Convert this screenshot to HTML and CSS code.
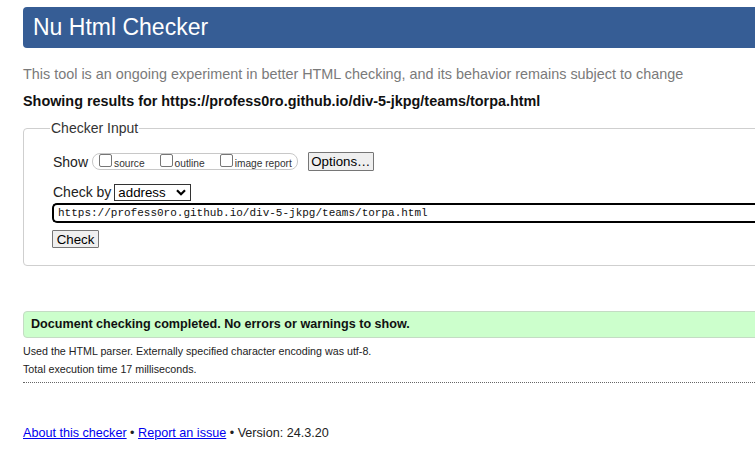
FILE: index.html
```html
<!DOCTYPE html>
<html lang="en">
<head>
<meta charset="utf-8">
<title>Nu Html Checker</title>
<link rel="stylesheet" href="styles.css">
</head>
<body>
<div class="page">
  <h1 class="header">Nu Html Checker</h1>
  <p class="intro">This tool is an ongoing experiment in better HTML checking, and its behavior remains subject to change</p>
  <p class="showing">Showing results for https://profess0ro.github.io/div-5-jkpg/teams/torpa.html</p>
  <fieldset class="checker">
    <legend>Checker Input</legend>
    <div class="row row-show">
      <span class="label">Show</span>
      <fieldset class="opts">
        <label class="opt"><span class="box"></span>source</label>
        <label class="opt"><span class="box"></span>outline</label>
        <label class="opt"><span class="box"></span>image report</label>
      </fieldset>
      <span class="btn btn-options">Options…</span>
    </div>
    <div class="row row-by">
      <span class="label">Check by</span>
      <span class="select">address<svg class="chev" width="10" height="7" viewBox="0 0 10 7"><path d="M1 1.2 L5 5.2 L9 1.2" fill="none" stroke="#000" stroke-width="2.2"/></svg></span>
    </div>
    <div class="url">https://profess0ro.github.io/div-5-jkpg/teams/torpa.html</div>
    <span class="btn btn-check">Check</span>
  </fieldset>
  <div class="success">Document checking completed. No errors or warnings to show.</div>
  <p class="details">Used the HTML parser. Externally specified character encoding was utf-8.</p>
  <p class="details">Total execution time 17 milliseconds.</p>
  <hr class="dots">
  <p class="footer"><a href="#">About this checker</a> • <a href="#">Report an issue</a> • Version: 24.3.20</p>
</div>
</body>
</html>
```

FILE: styles.css
```css
html, body {
  margin: 0;
  padding: 0;
  overflow: hidden;
  background: #fff;
}
body {
  font-family: "Liberation Sans", Arial, sans-serif;
  color: #000;
}
.page {
  width: 900px;
  padding: 7px 0 0 23px;
}
.header {
  margin: 0;
  height: 41px;
  line-height: 41px;
  padding-left: 10px;
  background: #365d95;
  color: #fff;
  font-size: 23px;
  font-weight: normal;
  border-radius: 4px;
}
.intro {
  margin: 17px 0 0;
  font-size: 14.4px;
  line-height: 18px;
  color: #7a7a7a;
}
.showing {
  margin: 9px 0 0;
  font-size: 14.4px;
  line-height: 18px;
  font-weight: bold;
  color: #111;
}
.checker {
  margin: 10px 0 0;
  padding: 16px 0 17px 29px;
  border: 1px solid #cfcfcf;
  border-radius: 4px;
}
.checker legend {
  margin-left: -3px;
  padding: 0 1px;
  font-size: 14px;
  line-height: 16px;
  color: #333;
}
.row {
  display: flex;
  align-items: center;
}
.row-show {
  height: 19px;
}
.label {
  font-size: 14px;
  color: #222;
}
.opts {
  display: flex;
  align-items: center;
  margin: 0 0 0 4px;
  padding: 0 5px 0 6px;
  height: 15px;
  border: 1px solid #c8c8c8;
  border-radius: 8px;
  gap: 15px;
}
.opt {
  display: flex;
  align-items: center;
  font-size: 10.2px;
  color: #333;
  padding-top: 3px;
}
.box {
  width: 11px;
  height: 11px;
  border: 1px solid #767676;
  border-radius: 2px;
  margin-right: 2px;
  margin-top: -5px;
  background: #fff;
}
.btn {
  display: inline-flex;
  align-items: center;
  justify-content: center;
  box-sizing: border-box;
  border: 1px solid #767676;
  background: #efefef;
  font-size: 13.3px;
  color: #000;
  border-radius: 1px;
}
.btn-options {
  margin-left: 10px;
  width: 66px;
  height: 19px;
}
.row-by {
  margin-top: 12px;
  height: 18px;
}
.select {
  display: inline-flex;
  align-items: center;
  justify-content: space-between;
  box-sizing: border-box;
  margin-left: 3px;
  width: 77px;
  height: 17px;
  padding: 0 4px 0 3px;
  border: 1px solid #333;
  font-size: 13.3px;
}
.url {
  box-sizing: border-box;
  margin: 2px 0 0 -1px;
  height: 20px;
  line-height: 16px;
  padding-left: 4px;
  border: 2px solid #000;
  border-right: none;
  border-radius: 5px 0 0 5px;
  font-family: "Liberation Mono", "DejaVu Sans Mono", monospace;
  font-size: 11px;
  color: #111;
}
.btn-check {
  margin: 7px 0 0 -1px;
  width: 47px;
  height: 18px;
}
.success {
  margin-top: 45px;
  box-sizing: border-box;
  height: 27px;
  line-height: 25px;
  padding-left: 7px;
  background: #ccffcc;
  border: 1px solid #c4dcc4;
  border-radius: 4px;
  font-size: 12.6px;
  font-weight: bold;
  color: #111;
}
.details {
  margin: 7px 0 0;
  font-size: 10.7px;
  line-height: 13px;
  color: #222;
}
.details + .details {
  margin-top: 5px;
}
.dots {
  margin: 6px 0 0;
  height: 0;
  border: none;
  border-top: 1px dotted #666;
}
.footer {
  margin: 41px 0 0;
  font-size: 12.6px;
  line-height: 18px;
  color: #222;
}
.footer a {
  color: #0000ee;
}
```
